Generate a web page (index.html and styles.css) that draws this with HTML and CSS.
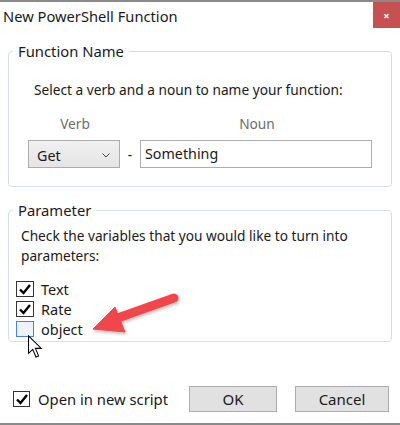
FILE: index.html
```html
<!DOCTYPE html>
<html>
<head>
<meta charset="utf-8">
<link rel="stylesheet" href="styles.css">
</head>
<body>
<div class="window">
  <div class="titlebar">
    <span class="title">New PowerShell Function</span>
    <span class="close">&#215;</span>
  </div>
  <fieldset class="group group-name">
    <legend>Function Name</legend>
    <p class="intro">Select a verb and a noun to name your function:</p>
    <div class="labels">
      <span class="lbl-verb">Verb</span>
      <span class="lbl-noun">Noun</span>
    </div>
    <div class="inputs">
      <div class="select">
        <span>Get</span>
        <svg class="chev" width="8" height="5" viewBox="0 0 8 5"><path d="M0.5 0.5 L4 4 L7.5 0.5" fill="none" stroke="#444" stroke-width="1"/></svg>
      </div>
      <span class="dash">-</span>
      <div class="textbox">Something</div>
    </div>
  </fieldset>
  <fieldset class="group group-param">
    <legend>Parameter</legend>
    <p class="desc">Check the variables that you would like to turn into parameters:</p>
    <div class="checks">
      <label class="check"><span class="box checked"><svg width="14" height="14" viewBox="0 0 14 14"><path d="M2 7.5 L5.5 11 L12 3" fill="none" stroke="#000" stroke-width="2.4"/></svg></span>Text</label>
      <label class="check"><span class="box checked"><svg width="14" height="14" viewBox="0 0 14 14"><path d="M2 7.5 L5.5 11 L12 3" fill="none" stroke="#000" stroke-width="2.4"/></svg></span>Rate</label>
      <label class="check"><span class="box hover"></span>object</label>
    </div>
  </fieldset>
  <div class="footer">
    <label class="check open"><span class="box checked"><svg width="14" height="14" viewBox="0 0 14 14"><path d="M2 7.5 L5.5 11 L12 3" fill="none" stroke="#000" stroke-width="2.4"/></svg></span>Open in new script</label>
    <div class="buttons">
      <button class="btn ok">OK</button>
      <button class="btn cancel">Cancel</button>
    </div>
  </div>
  <svg class="arrow" width="400" height="425" viewBox="0 0 400 425">
    <defs>
      <filter id="sh" x="-20%" y="-20%" width="140%" height="140%">
        <feDropShadow dx="1" dy="2" stdDeviation="1.5" flood-color="#000" flood-opacity="0.25"/>
      </filter>
    </defs>
    <g filter="url(#sh)" fill="#f1464c" stroke="#f1464c">
      <line x1="174" y1="298" x2="112" y2="320" stroke-width="9" stroke-linecap="round"/>
      <polygon points="93,329 115,307 125,332" stroke-width="1" stroke-linejoin="round"/>
    </g>
  </svg>
  <svg class="cursor" width="18" height="24" viewBox="0 0 17 22">
    <path d="M0.5 0.5 L0.5 17 L4.5 13.2 L7.5 20.5 L10 19.4 L7 12.3 L12.5 12.3 Z" fill="#fff" stroke="#000" stroke-width="1" stroke-linejoin="miter"/>
  </svg>
</div>
</body>
</html>
```

FILE: styles.css
```css
html, body {
  margin: 0;
  padding: 0;
  background: #fff;
}
body {
  font-family: "Noto Sans", "Open Sans", sans-serif;
  font-size: 13.7px;
  color: #1a1a1a;
}
.window {
  position: relative;
  width: 400px;
  height: 425px;
  border-top: 2px solid #8a8a8a;
  border-bottom: 2px solid #8a8a8a;
  box-sizing: border-box;
  overflow: hidden;
}
.titlebar {
  display: flex;
  justify-content: space-between;
  align-items: flex-start;
  height: 30px;
}
.title {
  font-size: 14.7px;
  padding-left: 3px;
  padding-top: 4px;
  line-height: 20px;
}
.close {
  width: 27px;
  height: 26px;
  background: #c75050;
  color: #fff;
  font-size: 11px;
  font-weight: bold;
  display: flex;
  align-items: center;
  justify-content: center;
}
.group {
  margin: 0 8px;
  border: 1px solid #d5dfe5;
  border-radius: 4px;
  padding: 0;
  min-inline-size: 0;
}
.group legend {
  font-size: 14.8px;
  padding: 0 5px;
  margin-left: 4px;
  line-height: 22px;
}
.group-name {
  margin-top: 8px;
  height: 147px;
  box-sizing: border-box;
}
.intro {
  margin: 17px 0 0 25px;
  line-height: 22px;
}
.labels {
  display: flex;
  color: #6d6d6d;
  margin-top: 12px;
  line-height: 22px;
}
.lbl-verb {
  width: 92px;
  margin-left: 20px;
  text-align: center;
}
.lbl-noun {
  width: 232px;
  margin-left: 20px;
  text-align: center;
}
.inputs {
  display: flex;
  align-items: center;
  margin-top: 5px;
  margin-left: 19px;
}
.select {
  width: 92px;
  height: 28px;
  box-sizing: border-box;
  border: 1px solid #acacac;
  background: linear-gradient(#f0f0f0, #e5e5e5);
  display: flex;
  align-items: center;
  justify-content: space-between;
  padding: 2px 9px 0 8px;
  font-size: 14.3px;
}
.dash {
  width: 20px;
  text-align: center;
}
.textbox {
  width: 232px;
  height: 28px;
  box-sizing: border-box;
  border: 1px solid #abadb3;
  padding: 0 4px;
  line-height: 25px;
  font-size: 14.3px;
}
.group-param {
  margin-top: 12px;
  height: 143px;
  box-sizing: border-box;
}
.desc {
  margin: 5px 8px 0 12px;
  line-height: 20px;
}
.checks {
  margin-top: 13px;
  margin-left: 7px;
  display: flex;
  flex-direction: column;
}
.check {
  display: flex;
  align-items: center;
  height: 20px;
  gap: 7px;
  font-size: 14.5px;
}
.box {
  width: 18px;
  height: 16px;
  box-sizing: border-box;
  border: 1.5px solid #333;
  display: flex;
  align-items: center;
  justify-content: center;
  background: #fff;
}
.box.hover {
  border: 1px solid #3f85e8;
  background: #eef3fb;
}
.footer {
  display: flex;
  justify-content: space-between;
  align-items: center;
  margin-top: 44px;
  padding: 0 11px 0 13px;
}
.open {
  gap: 8px;
  font-size: 14.8px;
}
.open .box {
  width: 17px;
}
.buttons {
  display: flex;
  gap: 18px;
}
.btn {
  font-family: "Noto Sans", "Open Sans", sans-serif;
  font-size: 15px;
  height: 26px;
  background: #e1e1e1;
  border: 1px solid #adadad;
  color: #1a1a1a;
  padding: 0;
  line-height: 22px;
}
.ok { width: 88px; }
.cancel { width: 94px; }
.arrow {
  position: absolute;
  left: 0;
  top: -2px;
  pointer-events: none;
}
.cursor {
  position: absolute;
  left: 28px;
  top: 333px;
}
```
